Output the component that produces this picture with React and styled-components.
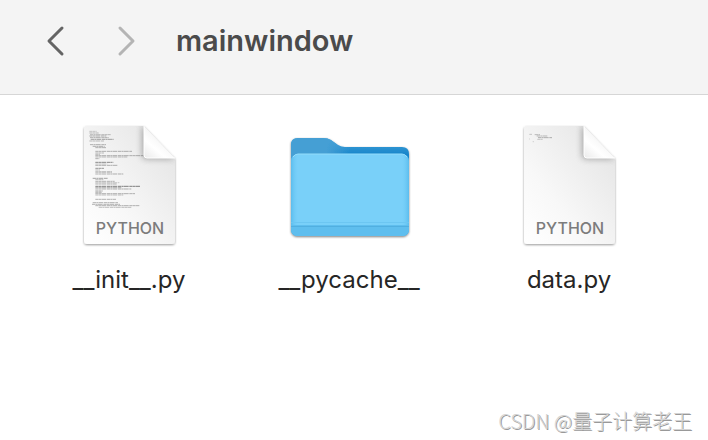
import React from 'react';
import styled, { createGlobalStyle } from 'styled-components';

const GlobalStyle = createGlobalStyle`
  body {
    margin: 0;
    background: #fff;
    font-family: Inter, 'Liberation Sans', sans-serif;
  }
`;

const Window = styled.div`
  display: flex;
  flex-flow: column nowrap;
  min-height: 100vh;
`;

const Toolbar = styled.header`
  display: flex;
  align-items: center;
  padding: 23px 40px 35px;
  background: #f4f4f4;
  border-bottom: 1px solid #d6d6d6;
`;

const NavButtons = styled.nav`
  display: flex;
  gap: 40px;
  margin-right: 32px;
`;

const NavButton = styled.button`
  display: flex;
  padding: 0;
  border: none;
  background: none;
  color: ${props => (props.disabled ? '#b4b4b4' : '#646464')};
`;

const Title = styled.h1`
  margin: 0;
  color: #4b4b4b;
  font-size: 29px;
  line-height: 36px;
  font-weight: 600;
`;

const Files = styled.main`
  display: grid;
  grid-template-columns: repeat(auto-fill, 220px);
  flex: 1;
  align-content: start;
  padding: 26px 0 0 19px;
`;

const File = styled.figure`
  display: flex;
  flex-flow: column nowrap;
  align-items: center;
  gap: 16px;
  margin: 0;
`;

const FileName = styled.figcaption`
  color: #262626;
  font-size: 24px;
  line-height: 30px;
`;

const Badge = styled.text`
  fill: #7c7c7c;
  font-family: Inter, sans-serif;
  font-size: 16px;
  font-weight: 500;
  text-anchor: middle;
`;

const Footer = styled.footer`
  padding: 0 16px 4px;
  color: #d4d4d4;
  font-family: 'Noto Sans CJK SC', sans-serif;
  font-size: 20px;
  font-weight: 300;
  line-height: 30px;
  text-align: right;
  text-shadow: 1px 1px 0 #999;
`;

// [x start, x end, y, strength], three units to a pixel
const initLines = [
  [58, 80, 49, 0.4], [58, 86, 54, 0.5], [60, 122, 59, 0.5], [58, 110, 63, 0.6],
  [60, 116, 68, 0.6], [62, 132, 73, 0.7], [58, 102, 78, 0.5],
  [60, 108, 89, 0.6], [68, 104, 94, 0.6], [76, 110, 98, 0.6],
  [76, 186, 109, 0.6], [76, 102, 114, 0.5], [76, 90, 118, 0.5], [76, 220, 122, 0.6],
  [76, 172, 126, 0.5], [76, 88, 131, 0.6],
  [76, 130, 142, 0.9], [76, 112, 147, 0.4], [76, 144, 151, 0.6],
  [76, 102, 160, 0.8], [76, 90, 165, 0.5], [76, 126, 171, 0.8], [76, 160, 177, 0.6],
  [68, 114, 190, 0.7], [76, 100, 194, 0.5], [76, 134, 199, 0.6], [76, 148, 203, 0.4],
  [76, 140, 207, 0.6], [76, 212, 214, 1], [76, 154, 218, 0.6], [76, 184, 222, 0.6],
  [76, 98, 228, 0.7], [76, 96, 232, 0.6], [76, 196, 236, 0.6], [76, 160, 240, 0.5],
  [76, 138, 253, 0.6],
  [68, 144, 263, 0.6], [66, 150, 268, 0.6], [76, 208, 272, 0.6], [86, 184, 277, 0.5],
];

const dataLines = [
  [58, 66, 58, 0.4], [74, 90, 59, 0.5], [80, 112, 63, 0.5], [84, 126, 68, 0.6],
  [82, 98, 73, 0.4], [58, 60, 72, 0.4], [68, 72, 80, 0.3],
];

const FolderIcon = () => (
  <svg width="128" height="128" viewBox="0 0 128 128" aria-hidden="true">
    <defs>
      <linearGradient id="folder-back" x1="0" y1="0" x2="0" y2="1">
        <stop offset="0" stopColor="#48a5db" />
        <stop offset="0.17" stopColor="#1785ca" />
        <stop offset="1" stopColor="#1785ca" />
      </linearGradient>
      <linearGradient id="folder-tab" x1="0" y1="0" x2="1" y2="0">
        <stop offset="0" stopColor="#459fd4" />
        <stop offset="0.3" stopColor="#459fd4" />
        <stop offset="0.5" stopColor="#459fd4" stopOpacity="0" />
      </linearGradient>
      <linearGradient id="folder-edge" x1="0" y1="0" x2="1" y2="0">
        <stop offset="0" stopColor="#4eb4e8" stopOpacity="0.7" />
        <stop offset="0.06" stopColor="#6dcaf7" stopOpacity="0" />
        <stop offset="0.94" stopColor="#6dcaf7" stopOpacity="0" />
        <stop offset="1" stopColor="#4eb4e8" stopOpacity="0.7" />
      </linearGradient>
      <filter id="folder-shadow" x="-10%" y="-10%" width="120%" height="120%">
        <feDropShadow dx="0" dy="1" stdDeviation="1" floodOpacity="0.5" />
      </filter>
    </defs>
    <g filter="url(#folder-shadow)">
      <path d="M6 24q0-7 7-7H38q5 0 8 2l7 5q3 2 7 2H117q7 0 7 7V108q0 7-7 7H13q-7 0-7-7Z" fill="url(#folder-back)" />
      <path d="M6 24q0-7 7-7H38q5 0 8 2l7 5q3 2 7 2H117q7 0 7 7V40H6Z" fill="url(#folder-tab)" />
      <rect x="6" y="33" width="118" height="82" rx="7" fill="#79d0f9" />
    </g>
    <rect x="6" y="33" width="118" height="82" rx="7" fill="url(#folder-edge)" />
    <path d="M6 104H124v4q0 7-7 7H13q-7 0-7-7Z" fill="#5fbeee" />
    <path d="M6 101.500H124" stroke="#6cc6f2" />
    <path d="M6 105.500H124" stroke="#51afe0" />
    <path d="M8 36q2-3 5-3H117q3 0 5 3" fill="none" stroke="#94dcfb" />
  </svg>
);

const PythonIcon = ({ lines }) => (
  <svg width="128" height="128" viewBox="0 0 128 128" aria-hidden="true">
    <defs>
      <linearGradient id="paper" x1="0" y1="1" x2="1" y2="0">
        <stop offset="0" stopColor="#fff" />
        <stop offset="0.35" stopColor="#f8f8f8" />
        <stop offset="1" stopColor="#e2e2e2" />
      </linearGradient>
      <linearGradient id="fold" x1="0.1" y1="1" x2="0.6" y2="0.4">
        <stop offset="0" stopColor="#ededed" />
        <stop offset="0.5" stopColor="#fff" />
        <stop offset="1" stopColor="#f4f4f4" />
      </linearGradient>
      <filter id="paper-shadow" x="-10%" y="-10%" width="120%" height="120%">
        <feDropShadow dx="0" dy="1" stdDeviation="1" floodOpacity="0.4" />
      </filter>
      <filter id="fold-shadow" x="-50%" y="-50%" width="200%" height="200%">
        <feGaussianBlur stdDeviation="3" />
      </filter>
      <clipPath id="paper-shape">
        <path d="M22 5H79L110 37V120q0 3-3 3H22q-3 0-3-3V8q0-3 3-3Z" />
      </clipPath>
    </defs>
    <path d="M22 5H79L110 37V120q0 3-3 3H22q-3 0-3-3V8q0-3 3-3Z" fill="url(#paper)" filter="url(#paper-shadow)" />
    <g clipPath="url(#paper-shape)">
      <path d="M77 5V34q0 4 4 4H110L79 5Z" fill="#777" opacity="0.6" filter="url(#fold-shadow)" />
    </g>
    <g transform="translate(5 -6) scale(0.3333)" stroke="#444" strokeWidth="2.5">
      {lines.map(([x1, x2, y, strength]) => (
        <path key={y} d={`M${x1} ${y}H${x2}`} opacity={strength * 0.8} strokeDasharray="10 1 6 1 14 2" />
      ))}
    </g>
    <path d="M79 5L110 37H82q-3 0-3-3Z" fill="url(#fold)" />
    <path d="M79 5V34q0 3 3 3H110" fill="none" stroke="#fff" />
    <Badge x="65" y="113">PYTHON</Badge>
  </svg>
);

const files = [
  { name: '__init__.py', icon: <PythonIcon lines={initLines} /> },
  { name: '__pycache__', icon: <FolderIcon /> },
  { name: 'data.py', icon: <PythonIcon lines={dataLines} /> },
];

const Chevron = ({ d }) => (
  <svg width="32" height="32" viewBox="0 0 32 32" fill="none" stroke="currentColor" strokeWidth="3" strokeLinecap="round" strokeLinejoin="round">
    <path d={d} />
  </svg>
);

const App = () => (
  <>
    <GlobalStyle />
    <Window>
      <Toolbar>
        <NavButtons>
          <NavButton type="button" aria-label="Back">
            <Chevron d="M22 3L9 16L22 29" />
          </NavButton>
          <NavButton type="button" aria-label="Forward" disabled>
            <Chevron d="M8 3L21 16L8 29" />
          </NavButton>
        </NavButtons>
        <Title>mainwindow</Title>
      </Toolbar>
      <Files>
        {files.map(file => (
          <File key={file.name}>
            {file.icon}
            <FileName>{file.name}</FileName>
          </File>
        ))}
      </Files>
      <Footer>CSDN @量子计算老王</Footer>
    </Window>
  </>
);

export default App;
